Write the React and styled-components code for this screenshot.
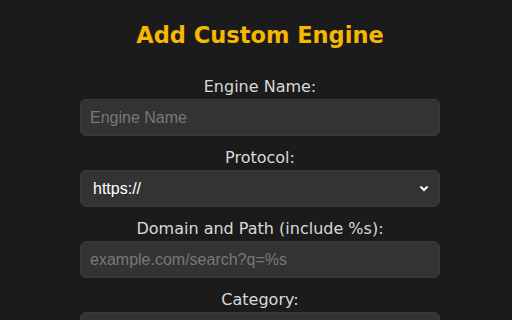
import styled, { createGlobalStyle } from 'styled-components';

const GlobalStyle = createGlobalStyle`
    html, body {
        margin: 0;
        padding: 0;
        background: #1b1b1b;
    }
`

const Page = styled.div`
    box-sizing: border-box;
    height: 320px;
    padding: 20px 0 0 8px;
    display: flex;
    flex-direction: column;
    align-items: center;
    overflow: hidden;
`

const Title = styled.h1`
    margin: 0 0 27px 0;
    font-family: "DejaVu Sans", sans-serif;
    font-weight: 700;
    font-size: 22.5px;
    line-height: 30px;
    color: #f5b700;
`

const Form = styled.form`
    width: 360px;
    display: flex;
    flex-direction: column;
`

const Field = styled.div`
    display: flex;
    flex-direction: column;
    margin-bottom: 12px;
`

const Label = styled.label`
    text-align: center;
    font-family: "DejaVu Sans", sans-serif;
    font-weight: 500;
    font-size: 16px;
    line-height: 20px;
    color: #d9d9d9;
    margin-bottom: 2px;
`

const Input = styled.input`
    box-sizing: border-box;
    height: 37px;
    width: 100%;
    padding: 0 9px;
    border: 1px solid #3a3a3a;
    border-radius: 6px;
    background: #333333;
    color: #eeeeee;
    font-family: "Liberation Sans", Arial, sans-serif;
    font-size: 16px;
    outline: none;

    &::placeholder {
        color: #787878;
    }
`

const SelectBox = styled.div`
    box-sizing: border-box;
    height: 37px;
    width: 100%;
    padding: 0 10px 0 12px;
    border: 1px solid #3a3a3a;
    border-radius: 6px;
    background: #333333;
    display: flex;
    align-items: center;
    justify-content: space-between;
    color: #ffffff;
    font-family: "Liberation Sans", Arial, sans-serif;
    font-size: 16px;
`

const Chevron = () => (
    <svg width="10" height="7" viewBox="0 0 10 7" fill="none">
        <path d="M1.5 1.5L5 5L8.5 1.5" stroke="#ffffff" strokeWidth="2" />
    </svg>
)

const App = () => {
    return (
        <>
            <GlobalStyle />
            <Page>
                <Title>Add Custom Engine</Title>
                <Form>
                    <Field>
                        <Label>Engine Name:</Label>
                        <Input placeholder="Engine Name" />
                    </Field>
                    <Field>
                        <Label>Protocol:</Label>
                        <SelectBox>
                            <span>https://</span>
                            <Chevron />
                        </SelectBox>
                    </Field>
                    <Field>
                        <Label>Domain and Path (include %s):</Label>
                        <Input placeholder="example.com/search?q=%s" />
                    </Field>
                    <Field>
                        <Label>Category:</Label>
                        <SelectBox>
                            <span />
                            <Chevron />
                        </SelectBox>
                    </Field>
                </Form>
            </Page>
        </>
    )
}

export default App
